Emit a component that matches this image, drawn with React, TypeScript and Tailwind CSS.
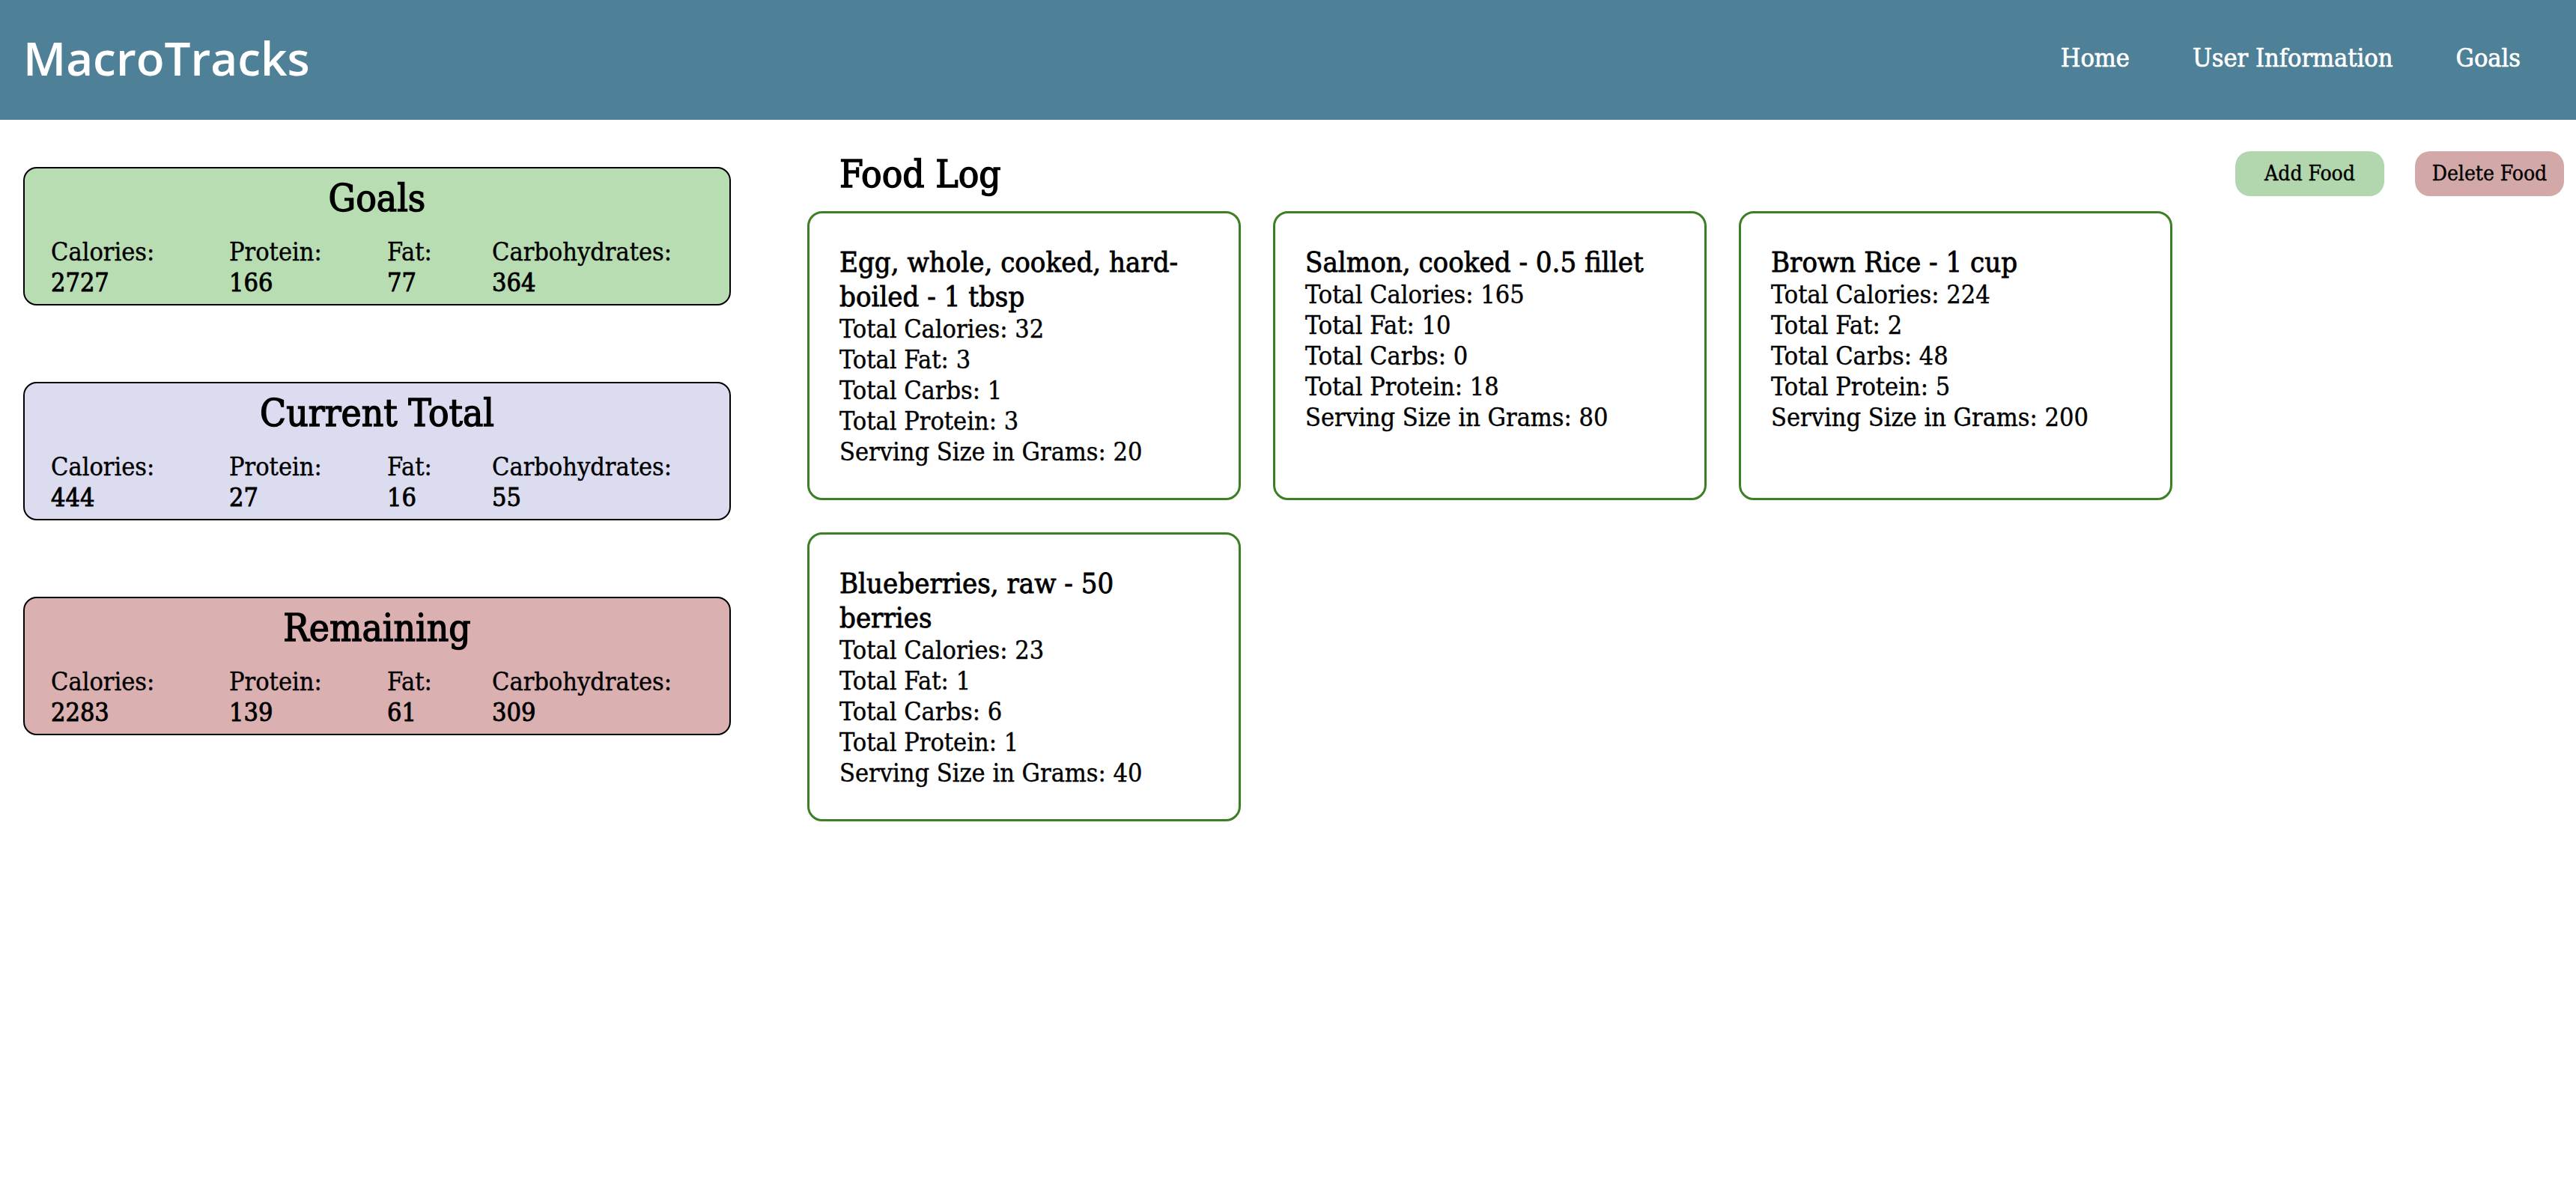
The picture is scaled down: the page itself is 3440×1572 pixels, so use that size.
import React from 'react'

const slab = { fontFamily: '"DejaVu Serif Condensed", "DejaVu Serif", serif' }

type Macros = { calories: number; protein: number; fat: number; carbs: number }

const summaries: { title: string; bg: string; values: Macros }[] = [
  { title: 'Goals', bg: 'bg-[#b9ddb3]', values: { calories: 2727, protein: 166, fat: 77, carbs: 364 } },
  { title: 'Current Total', bg: 'bg-[#dcdcf0]', values: { calories: 444, protein: 27, fat: 16, carbs: 55 } },
  { title: 'Remaining', bg: 'bg-[#dbb0b1]', values: { calories: 2283, protein: 139, fat: 61, carbs: 309 } },
]

const foods = [
  { name: 'Egg, whole, cooked, hard-boiled - 1 tbsp', calories: 32, fat: 3, carbs: 1, protein: 3, grams: 20 },
  { name: 'Salmon, cooked - 0.5 fillet', calories: 165, fat: 10, carbs: 0, protein: 18, grams: 80 },
  { name: 'Brown Rice - 1 cup', calories: 224, fat: 2, carbs: 48, protein: 5, grams: 200 },
  { name: 'Blueberries, raw - 50 berries', calories: 23, fat: 1, carbs: 6, protein: 1, grams: 40 },
]

function SummaryBox({ title, bg, values }: { title: string; bg: string; values: Macros }) {
  return (
    <div className={`${bg} border-2 border-black rounded-[18px] pt-[9px] pb-[8px] pl-[35px]`}>
      <h2 className="text-[51px] leading-[61px] font-normal [-webkit-text-stroke:1.4px_black] text-center pr-[35px] mb-[21px]">
        {title}
      </h2>
      <div className="grid grid-cols-[238px_211px_140px_1fr] text-[34px] leading-[41px] [-webkit-text-stroke:0.4px_black]">
        <span>Calories:</span>
        <span>Protein:</span>
        <span>Fat:</span>
        <span>Carbohydrates:</span>
        <span className="[-webkit-text-stroke:0.9px_black]">{values.calories}</span>
        <span className="[-webkit-text-stroke:0.9px_black]">{values.protein}</span>
        <span className="[-webkit-text-stroke:0.9px_black]">{values.fat}</span>
        <span className="[-webkit-text-stroke:0.9px_black]">{values.carbs}</span>
      </div>
    </div>
  )
}

export default function App() {
  return (
    <div className="min-h-screen bg-white text-black" style={slab}>
      <nav className="h-[160px] bg-[#4e8098] flex items-center justify-between pl-[31px] pr-[74px] text-white">
        <span className="text-[62px] font-semibold leading-none pb-[6px]" style={{ fontFamily: '"Open Sans", sans-serif' }}>
          MacroTracks
        </span>
        <div className="flex items-center gap-[84px] text-[34px] [-webkit-text-stroke:0.7px_white] pb-[6px]">
          <a>Home</a>
          <a>User Information</a>
          <a>Goals</a>
        </div>
      </nav>

      <div className="flex">
        <aside className="w-[945px] ml-[31px] mt-[63px] flex flex-col gap-[102px]">
          {summaries.map((s) => (
            <SummaryBox key={s.title} {...s} />
          ))}
        </aside>

        <main className="flex-1 ml-[102px] mr-[16px] mt-[42px]">
          <div className="flex items-start justify-between h-[61px] mb-[19px]">
            <h1 className="text-[51px] leading-[61px] font-normal [-webkit-text-stroke:1.4px_black] pl-[43px]">Food Log</h1>
            <div className="flex gap-[41px] [-webkit-text-stroke:0.4px_black]">
              <button className="w-[199px] h-[60px] rounded-[20px] bg-[#b2d6ad] text-[28px]">Add Food</button>
              <button className="w-[199px] h-[60px] rounded-[20px] bg-[#d3a8a8] text-[28px]">Delete Food</button>
            </div>
          </div>

          <div className="grid grid-cols-[579px_579px_579px] gap-[43px]">
            {foods.map((f) => (
              <div key={f.name} className="border-[3px] border-[#3d7f25] rounded-[20px] pt-[42px] pb-[41px] px-[40px]">
                <h3 className="text-[38px] leading-[46px] [-webkit-text-stroke:0.8px_black]">{f.name}</h3>
                <div className="text-[34px] leading-[41px] [-webkit-text-stroke:0.4px_black]">
                  <p>Total Calories: {f.calories}</p>
                  <p>Total Fat: {f.fat}</p>
                  <p>Total Carbs: {f.carbs}</p>
                  <p>Total Protein: {f.protein}</p>
                  <p>Serving Size in Grams: {f.grams}</p>
                </div>
              </div>
            ))}
          </div>
        </main>
      </div>
    </div>
  )
}
